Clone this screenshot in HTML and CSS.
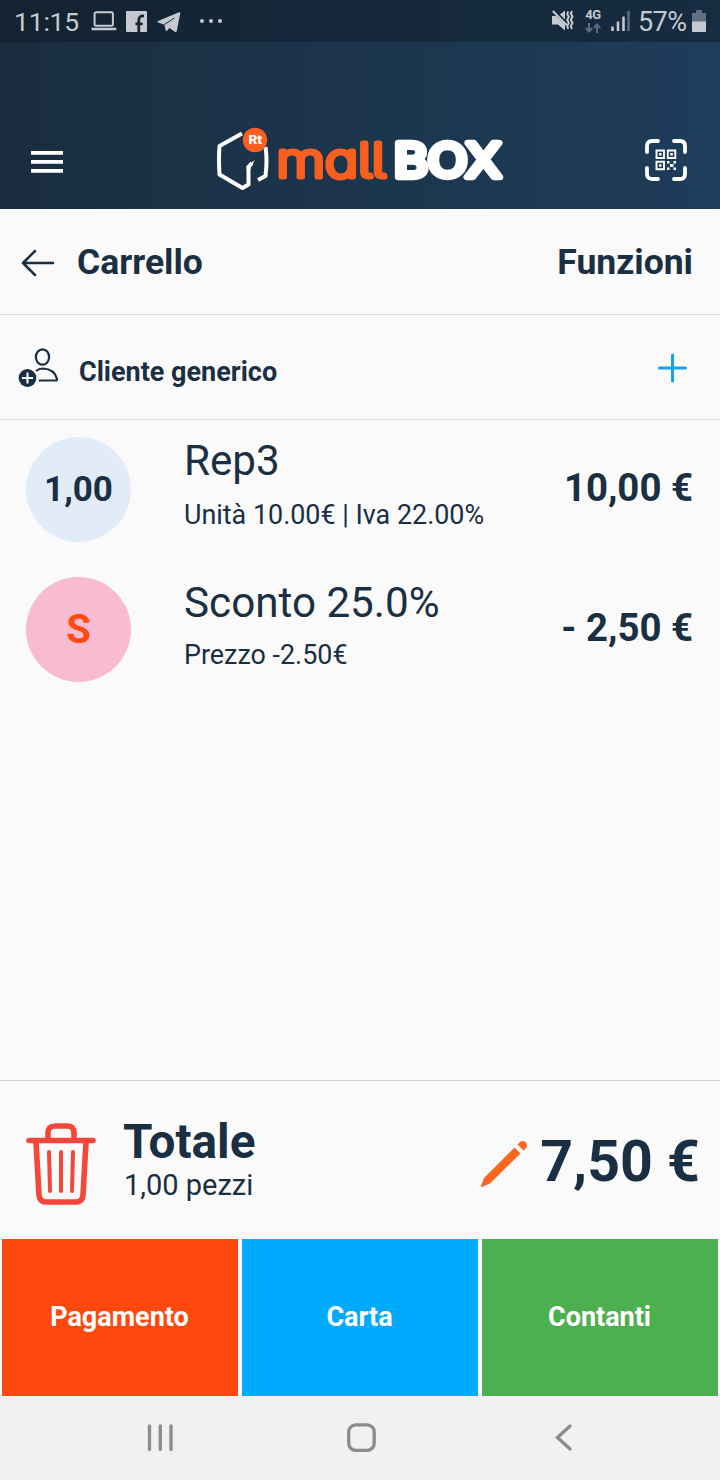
FILE: index.html
```html
<!DOCTYPE html>
<html lang="it">
<head>
<meta charset="utf-8">
<title>mallBOX - Carrello</title>
<link rel="stylesheet" href="styles.css">
</head>
<body>
<div class="screen">
  <header class="header">
    <div class="status">
      <span class="status-time">11:15</span>
      <svg class="ic-laptop" width="26" height="20" viewBox="0 0 26 20" fill="none" stroke="#c6cad0"><rect x="3.600" y="1.200" width="18.300" height="13.500" rx="1.500" stroke-width="2"/><path d="M.5 18H25.300" stroke-width="2.500"/></svg>
      <svg class="ic-fb" width="21" height="21" viewBox="0 0 21 21"><rect width="21" height="21" rx="1" fill="#c6cad0"/><path d="M12.800 21V12.800H16.600M12.800 13.500V9Q12.800 4.500 18 5M9.500 12.800H14" fill="none" stroke="#152534" stroke-width="2.800"/></svg>
      <svg class="ic-tg" width="24" height="21" viewBox="0 0 24 21" fill="#c6cad0"><path d="M.5 10.300Q0 9.500 1 9L22 .3Q23.500 0 23.200 1.500L19.800 19Q19.300 20.800 17.800 19.800L12.500 16 10 18.800Q8.800 19.500 8.500 18L7.500 12.800Z"/><path d="M7.500 12.500 17.500 6" fill="none" stroke="#152534" stroke-width="1"/></svg>
      <span class="dots"><i></i><i></i><i></i></span>
      <span class="grow"></span>
      <svg class="ic-mute" width="24" height="22" viewBox="0 0 24 22" fill="#c6cad0"><path d="M1 6H5L14 14.500V20.500L7 14.500H1ZM9 4.500 14 .5V9.500Z"/><path d="M1.800 1 15.500 15" stroke="#c6cad0" stroke-width="2"/><path d="M21 1 19.800 3.500 21.500 6.500 19.800 9.800 21.500 13 19.800 16 21 19M17.200 1.500 16.200 4 17.800 6.800 16.200 9.800 17.800 13 16.200 16 17.200 19" fill="none" stroke="#c6cad0" stroke-width="2"/></svg>
      <span class="net"><b>4G</b><svg width="16" height="10" viewBox="0 0 16 10" fill="none" stroke="#5c6d7d" stroke-width="2"><path d="M4 0V8M.8 5 4 8.500 7.200 5M12 10V2M8.800 5 12 1.500 15.200 5"/></svg></span>
      <svg class="ic-signal" width="19" height="20" viewBox="0 0 19 20" stroke-width="2.500"><path d="M1.500 15.500V20M7 10.500V20M12.500 5.500V20" stroke="#c6cad0"/><path d="M17.500 0V20" stroke="#5c6d7d"/></svg>
      <span class="status-pct">57%</span>
      <svg class="ic-batt" width="14" height="22" viewBox="0 0 14 22"><path d="M4 0H10V3H14V12H0V3H4Z" fill="#5f707f"/><path d="M0 11.500H14V21Q14 22 13 22H1Q0 22 0 21Z" fill="#c6cad0"/></svg>
    </div>
    <div class="brandbar">
      <svg class="menu" width="32" height="22" viewBox="0 0 32 22" fill="#fff"><path d="M0 0H32V3.800H0ZM0 9H32V12.800H0ZM0 18H32V21.800H0Z"/></svg>
      <svg class="logo" width="290" height="66" viewBox="0 0 290 66">
        <g fill="none" stroke="#fff" stroke-width="4" stroke-linejoin="round"><path d="M27 6.500 4.500 19Q3.500 32 4.500 47.500L27.500 61 33.500 57.500V40L37 36M50.500 20Q52.500 33 50.500 49L43 53"/></g>
        <path d="M31.500 39 40 33 36.500 38.500 35.500 42H31.500Z" fill="#fff"/>
        <circle cx="40" cy="13" r="12.200" fill="#f9601f"/>
        <text class="logo-rt" x="33.500" y="17" textLength="14" lengthAdjust="spacingAndGlyphs">Rt</text>
        <text class="logo-mall" x="61.500" y="50" textLength="109" lengthAdjust="spacingAndGlyphs">mall</text>
        <text class="logo-box" x="179" y="49.500" textLength="107" lengthAdjust="spacingAndGlyphs">BOX</text>
      </svg>
      <svg class="scan" width="42" height="42" viewBox="0 0 42 42" fill="none" stroke="#fff"><path d="M2 13V7Q2 2 7 2H13M29 2H35Q40 2 40 7V13M40 29V35Q40 40 35 40H29M13 40H7Q2 40 2 35V29" stroke-width="3.800" stroke-linecap="round"/><path d="M11.500 11.500H19V19H11.500ZM22.800 11.500H30.300V19H22.800ZM11.500 22.800H19V30.300H11.500Z" stroke-width="1.900"/><path d="M14 14H16.500V16.500H14ZM25.300 14H27.800V16.500H25.300ZM14 25.300H16.500V27.800H14ZM22 22H24.500V24.500H22ZM28.500 22H31V24.500H28.500ZM25 25H28.500V28H25ZM22 28.500H24.500V31H22ZM28.500 28.500H31V31H28.500Z" fill="#fff" stroke="none"/></svg>
    </div>
  </header>

  <section class="titlebar">
    <svg class="back" width="34" height="28" viewBox="0 0 34 28" fill="none" stroke="#1b2f42" stroke-width="2.500" stroke-linecap="round" stroke-linejoin="round"><path d="M32 14H2M14 2 2 14 14 26"/></svg>
    <h1>Carrello</h1>
    <span class="functions">Funzioni</span>
  </section>

  <section class="customer">
    <svg class="person" width="42" height="42" viewBox="0 0 42 42" fill="none" stroke="#1b2f42" stroke-width="2.200"><ellipse cx="24.500" cy="10" rx="6.600" ry="7.700"/><path d="M18 24Q21 21.500 25 21.500 36.500 22 39 32 39 33.500 37.500 33.500H20.800" stroke-linejoin="round"/><circle cx="9.500" cy="31" r="8.900" fill="#1b2f42" stroke="none"/><path d="M9.500 25.500V36.500M4 31H15" stroke="#fff" stroke-width="2"/></svg>
    <span class="customer-name">Cliente generico</span>
    <svg class="add" width="30" height="30" viewBox="0 0 30 30" fill="none" stroke="#12a3ee" stroke-width="3" stroke-linecap="round"><path d="M15.500 2V28M2.500 15H28.500"/></svg>
  </section>

  <main class="items">
    <article class="item">
      <div class="qty">1,00</div>
      <div class="info"><div class="name rep">Rep3</div><div class="detail">Unità 10.00€ | Iva 22.00%</div></div>
      <div class="price">10,00 €</div>
    </article>
    <article class="item">
      <div class="qty discount">S</div>
      <div class="info"><div class="name">Sconto 25.0%</div><div class="detail">Prezzo -2.50€</div></div>
      <div class="price">- 2,50 €</div>
    </article>
  </main>

  <section class="total">
    <svg class="trash" width="70" height="84" viewBox="0 0 70 84" fill="none" stroke="#f4473a" stroke-linecap="round" stroke-linejoin="round"><path d="M3 18.500H67M22 17V11Q22 4 29 4H41Q48 4 48 11V17M10 20 13 73Q13.500 80 20 80H50Q56.500 80 57 73L60 20" stroke-width="5.600"/><path d="M23 30 24 69M35 30V69M47 30 46 69" stroke-width="4"/></svg>
    <div class="total-label"><h2>Totale</h2><div class="pieces">1,00 pezzi</div></div>
    <svg class="pencil" width="48" height="48" viewBox="0 0 48 48" fill="#f9671e"><path d="M.5 47.500 4 38 34.500 7.500 40.500 13.500 10 43.500ZM37.500 4.500 40 2Q43 0 46 2.500 48 5.500 46 8L43.500 10.500Z"/></svg>
    <div class="amount">7,50 €</div>
  </section>

  <div class="actions">
    <button class="action pay">Pagamento</button>
    <button class="action card">Carta</button>
    <button class="action cash">Contanti</button>
  </div>

  <nav class="sysnav">
    <svg width="240" height="84" viewBox="0 0 240 84"><path d="M149.500 30V53.500M160.300 30V53.500M171 30V53.500"/></svg>
    <svg width="240" height="84" viewBox="0 0 240 84"><rect x="108.700" y="28.800" width="25.500" height="25.500" rx="7"/></svg>
    <svg width="240" height="84" viewBox="0 0 240 84"><path d="M90 30 77.500 41.500 90 53"/></svg>
  </nav>
</div>
</body>
</html>
```
FILE: styles.css
```css
* { box-sizing: border-box; }
body { margin: 0; font-family: Roboto, "Liberation Sans", sans-serif; color: #1b2f42; }
svg { display: block; flex: none; }
h1, h2 { margin: 0; font-weight: 700; }
.screen { width: 720px; height: 1480px; display: flex; flex-direction: column; background: #fafafa; overflow: hidden; white-space: nowrap; }

.header { height: 209px; background: linear-gradient(90deg, #1a2d3f, #1e3d5b); }
.status { height: 42px; padding: 0 14px; display: flex; align-items: center; background: rgba(12, 22, 30, .42); color: #c6cad0; }
.status-time { width: 77px; font-size: 26.500px; line-height: 42px; padding-top: 2px; letter-spacing: -.2px; }
.ic-fb { margin-left: 9px; }
.ic-tg { margin-left: 10px; margin-top: 2px; }
.dots { display: flex; gap: 5px; margin-left: 19px; }
.dots i { width: 4px; height: 4px; border-radius: 50%; background: #c6cad0; }
.grow { flex: 1; }
.net { width: 16px; margin-left: 10px; display: flex; flex-direction: column; align-items: center; gap: 2px; }
.net b { font-size: 13px; line-height: 12px; letter-spacing: -.3px; }
.ic-signal { margin-left: 10px; }
.status-pct { margin-left: 8px; width: 49px; font-size: 27px; line-height: 42px; padding-top: 2px; letter-spacing: -.6px; }
.ic-batt { margin-left: 5px; }

.brandbar { height: 167px; padding: 85px 33px 0 31px; display: flex; align-items: flex-start; }
.menu { margin-top: 24px; }
.logo { margin-left: 152px; }
.scan { margin-left: auto; margin-top: 12px; }
.logo-rt { font: 800 11.500px Inter, sans-serif; fill: #fff; }
.logo-mall { font: 200 47px Inter, sans-serif; font-feature-settings: "cv11", "cv05"; fill: #f9601f; stroke: #f9601f; stroke-width: 5px; stroke-linejoin: round; }
.logo-box { font: 400 46px Inter, sans-serif; fill: #fff; stroke: #fff; stroke-width: 6.500px; stroke-linejoin: round; }

.titlebar { height: 106px; padding: 0 27px 0 21px; display: flex; align-items: center; border-bottom: 1px solid #dcdcdc; font-size: 35.500px; font-weight: 700; }
.titlebar h1 { font-size: 35.500px; margin-left: 22px; }
.back { margin-top: 3px; }
.functions { margin-left: auto; }
.customer { height: 105px; padding: 0 33px 0 18px; display: flex; align-items: center; border-bottom: 1px solid #dcdcdc; }
.person { margin-top: 2px; }
.customer-name { margin-left: 19px; margin-top: 9px; font-size: 27px; font-weight: 700; }
.add { margin-left: auto; margin-top: 2px; }

.items { height: 660px; }
.item { height: 140px; padding: 16.500px 27px 0 26px; display: flex; }
.qty { width: 105px; height: 105px; border-radius: 50%; background: #e2ecf8; font-size: 35px; font-weight: 700; display: flex; align-items: center; justify-content: center; }
.discount { background: #f8bbd0; color: #ff4a12; font-size: 40px; }
.info { margin-left: 53px; }
.name { font-size: 42.200px; line-height: 50px; margin-top: 1px; }
.rep { margin-top: -.5px; }
.detail { font-size: 26.900px; line-height: 31px; margin-top: 12.500px; }
.rep + .detail { margin-top: 14px; }
.price { margin-left: auto; line-height: 101px; font-size: 38.400px; font-weight: 700; }

.total { height: 158px; padding: 0 20px 0 26px; display: flex; align-items: flex-start; border-top: 1px solid #d3d3d3; }
.trash { margin-top: 41px; }
.total-label { margin: 33px 0 0 27px; }
.total h2 { font-size: 47.700px; line-height: 56px; }
.pieces { font-size: 29px; line-height: 34px; margin: -2px 0 0 1px; }
.pencil { margin: 59px 12px 0 auto; }
.amount { font-size: 57.300px; line-height: 66px; font-weight: 700; margin-top: 48px; }

.actions { height: 158px; padding: 1px 2px 0; display: grid; grid-template-columns: repeat(3, 1fr); gap: 4px; }
.action { border: 0; padding: 0 1px 2px 0; color: #fff; font: 700 27px Roboto, sans-serif; }
.pay { background: #ff480e; }
.card { background: #00aaff; }
.cash { background: #4caf50; }
.sysnav { height: 84px; display: flex; background: #f1f1f1; }
.sysnav svg { fill: none; stroke: #8c8c8c; stroke-width: 3.300px; stroke-linecap: round; stroke-linejoin: miter; }
```
